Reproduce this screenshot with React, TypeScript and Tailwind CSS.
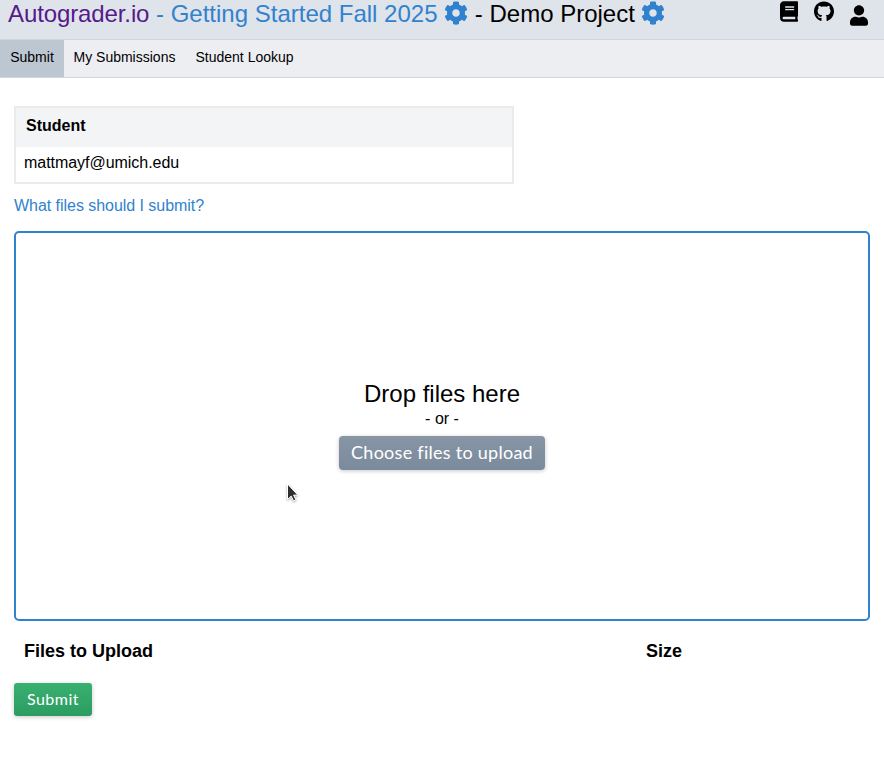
import { FaBook, FaCog, FaGithub, FaUser } from "react-icons/fa";

const tabs = [
  { label: "My Submissions", width: "w-[122px]" },
  { label: "Student Lookup", width: "w-[118px]" },
];

export default function App() {
  return (
    <div className="relative h-[770px] w-[884px] overflow-hidden bg-white font-['Liberation_Sans',sans-serif] text-black">
      <header className="flex h-10 items-start justify-between border-b border-[#cfd7de] bg-[#dfe3ea] pl-2 pr-[16.5px]">
        <h1 className="flex h-7 items-center whitespace-pre text-2xl leading-7">
          <a className="tracking-[-0.11px] text-[#551a8b]">Autograder.io</a>
          <a className="text-[#3182ce]"> - Getting Started Fall 2025 </a>
          <FaCog className="mb-[3px] size-6 text-[#3182ce]" />
          <span> - Demo Project </span>
          <FaCog className="-ml-[0.25px] mb-[3px] size-6 text-[#3182ce]" />
        </h1>
        <div className="flex items-start">
          <FaBook className="mr-4 mt-px h-[21px] w-[18px]" />
          <FaGithub className="mr-4 mt-px h-[21px] w-[20px]" />
          <FaUser className="mt-[5px] h-[21px] w-[18px]" />
        </div>
      </header>

      <nav className="flex h-[38px] border-b border-[#cfd7de] bg-[#edeef2] text-sm leading-[34px]">
        <div className="w-16 bg-[#bdc7d1] text-center">Submit</div>
        {tabs.map((tab) => (
          <div key={tab.label} className={`${tab.width} whitespace-nowrap pl-[9.5px]`}>
            {tab.label}
          </div>
        ))}
      </nav>

      <main className="px-3.5 pt-7">
        <section className="h-[78px] w-[500px] border-2 border-[#ebebec]">
          <div className="h-[39px] bg-[#f3f4f6] pl-[10px] text-base font-bold leading-[35px]">Student</div>
          <div className="pl-2 text-base leading-[32px] tracking-[-0.04px]">mattmayf@umich.edu</div>
        </section>

        <a className="mt-2.5 block h-[37px] text-base leading-6 tracking-[-0.04px] text-[#3182ce]">
          What files should I submit?
        </a>

        <section className="flex h-[390px] flex-col items-center rounded-[5px] border-2 border-[#3182ce] pt-[145px]">
          <div className="text-2xl leading-8">Drop files here</div>
          <div className="text-base leading-[18px]">- or -</div>
          <button className="mt-2 h-[34px] w-[206px] whitespace-nowrap rounded-[4px] bg-linear-to-b from-[#8795a5] to-[#7b8b9c] pb-0.5 font-['Lato',sans-serif] text-lg leading-[32px] tracking-[0.27px] text-white shadow-[0_1px_4px_rgba(0,0,0,0.22)]">
            Choose files to upload
          </button>
        </section>

        <div className="mt-[17px] flex h-[45px] pl-2.5 text-lg font-bold leading-[26px]">
          <div className="w-[622px]">Files to Upload</div>
          <div>Size</div>
        </div>

        <button className="block h-[33px] w-[78px] rounded-[3px] bg-linear-to-b from-[#38b070] to-[#2d9c62] pb-0.5 font-['Lato',sans-serif] text-base leading-[30px] tracking-[0.5px] text-white shadow-[0_1px_4px_rgba(0,0,0,0.22)]">
          Submit
        </button>
      </main>

      <svg className="absolute left-[284px] top-[481px] h-6 w-4 drop-shadow-[0_1px_1px_rgba(0,0,0,0.35)]" viewBox="0 0 16 24">
        <path d="M3.5 3v15.5l3.7-3.4 2.4 4.8 2.3-1.1-2.3-4.7h4.3z" fill="#2e2e2e" stroke="#fff" strokeWidth="1" />
      </svg>
    </div>
  );
}
